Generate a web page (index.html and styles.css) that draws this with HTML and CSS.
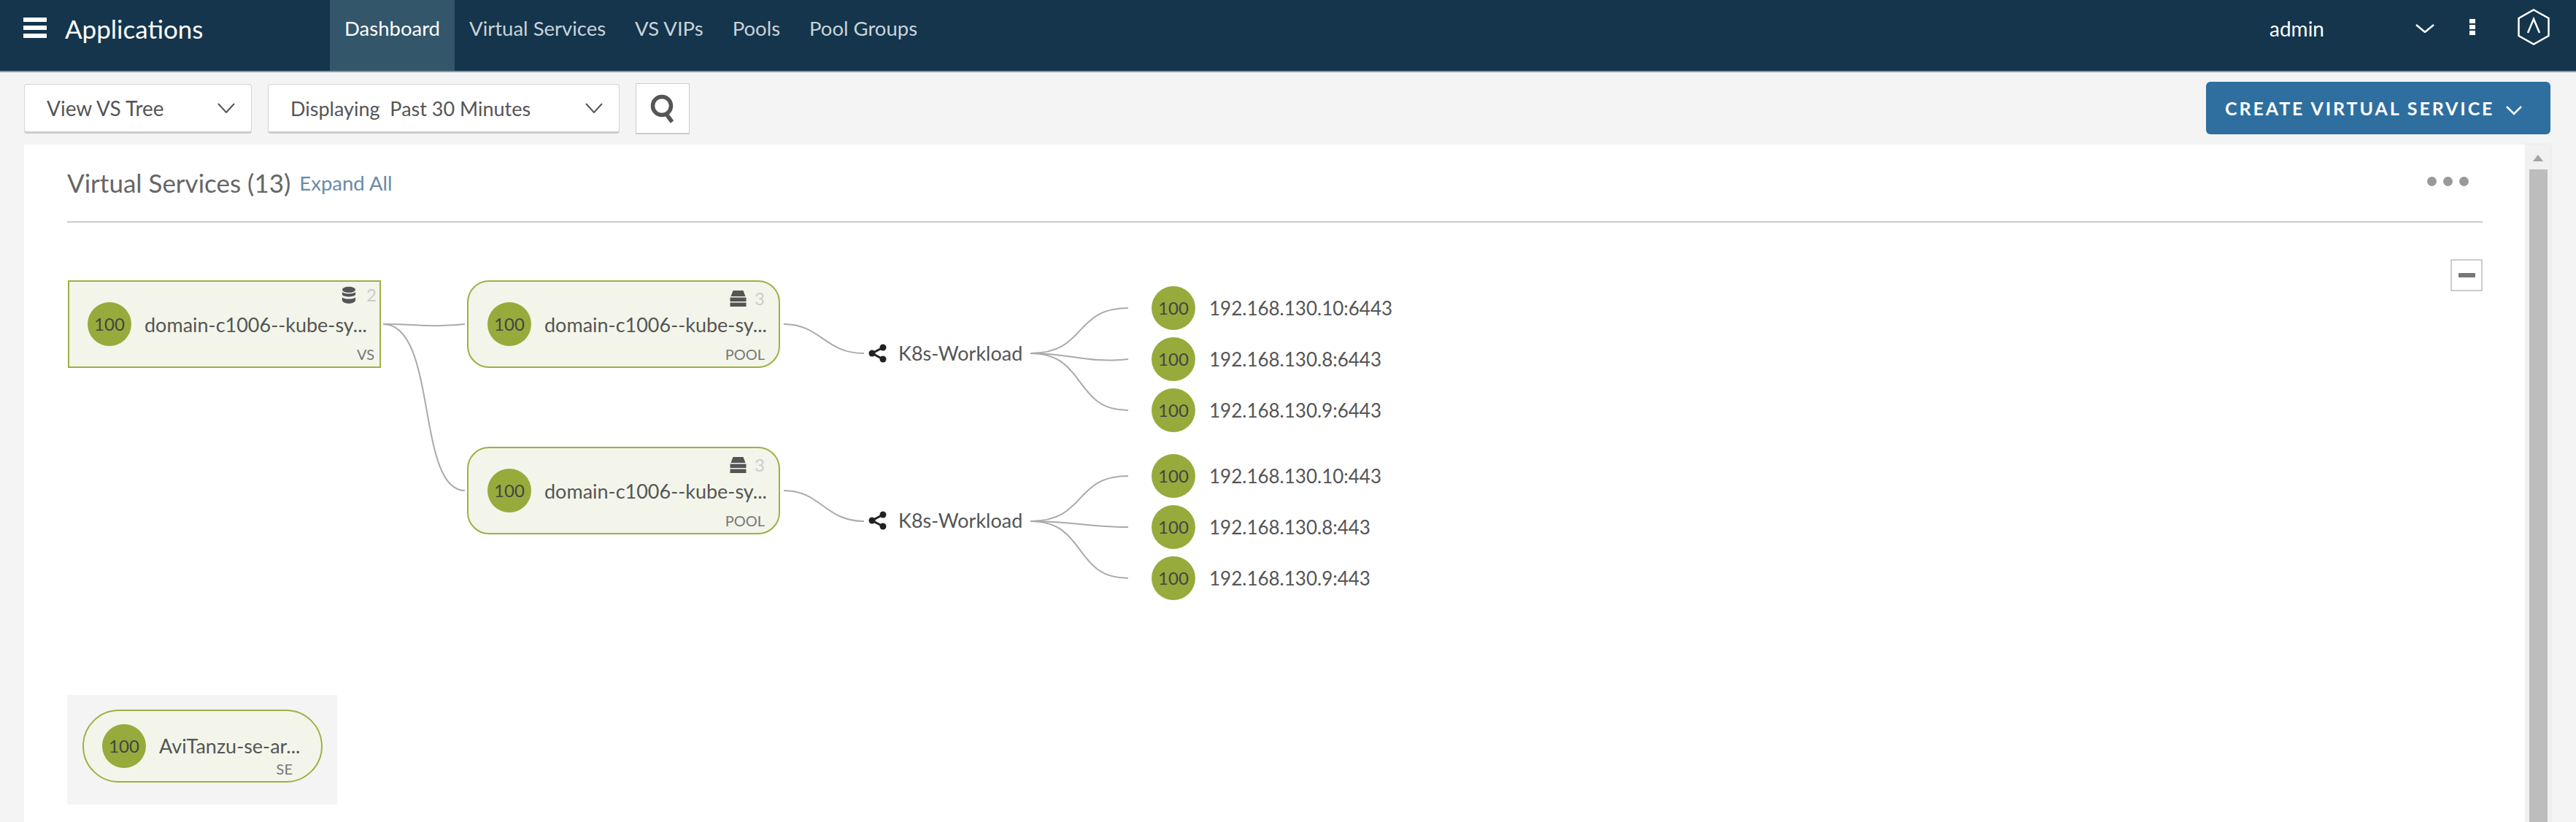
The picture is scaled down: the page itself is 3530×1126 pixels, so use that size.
FILE: index.html
```html
<!DOCTYPE html>
<html>
<head>
<meta charset="utf-8">
<title>Applications</title>
<link rel="stylesheet" href="styles.css">
</head>
<body>
<div class="topbar">
<div class="menu-icon"><span></span><span></span><span></span></div>
<div class="app-title">Applications</div>
<div class="nav">
<a class="active">Dashboard</a>
<a>Virtual Services</a>
<a>VS VIPs</a>
<a>Pools</a>
<a>Pool Groups</a>
</div>
<div class="user">admin</div>
<svg class="user-chev" viewBox="0 0 26 12"><path d="M1 1 L13 11 L25 1"/></svg>
<div class="kebab"><span></span><span></span><span></span></div>
<svg class="logo" viewBox="0 0 44 50"><path class="hex" d="M22 1.5 L42.5 13 V37 L22 48.5 L1.5 37 V13 Z"/><path class="caret" d="M14 33 L22 14 L30 33"/></svg>
</div>

<div class="toolbar">
<div class="select select-tree">View VS Tree<svg class="chev" viewBox="0 0 24 14"><path d="M1 1 L12 13 L23 1"/></svg></div>
<div class="select select-time">Displaying&nbsp; Past 30 Minutes<svg class="chev" viewBox="0 0 24 14"><path d="M1 1 L12 13 L23 1"/></svg></div>
<div class="search-btn"><svg viewBox="0 0 36 40"><circle cx="17" cy="16" r="12.5"/><path d="M22 26 L31 38"/></svg></div>
<div class="create-btn">CREATE VIRTUAL SERVICE<svg viewBox="0 0 22 14"><path d="M1 2 L11 12 L21 2"/></svg></div>
</div>

<div class="main">
<div class="panel">
<div class="panel-head">
<span class="panel-title">Virtual Services (13)</span>
<a class="expand">Expand All</a>
<div class="dots"><span></span><span></span><span></span></div>
</div>
<div class="tree">
<svg class="links" viewBox="33 305 3428 821">
<path d="M525 444 C580 444 580 449 637 444"/>
<path d="M525 444 C600 444 570 672 637 672"/>
<path d="M1074 444 C1125 444 1130 484 1184 484"/>
<path d="M1074 672 C1125 672 1130 714 1184 714"/>
<path d="M1412 484 C1490 484 1470 422 1546 422"/>
<path d="M1412 484 C1470 484 1490 498 1546 492"/>
<path d="M1412 484 C1490 484 1470 562 1546 562"/>
<path d="M1412 714 C1490 714 1470 652 1546 652"/>
<path d="M1412 714 C1470 714 1490 722 1546 722"/>
<path d="M1412 714 C1490 714 1470 792 1546 792"/>
</svg>
<button class="collapse"><span></span></button>

<div class="node node-vs">
<div class="score">100</div>
<div class="name">domain-c1006--kube-sy...</div>
<div class="count"><svg viewBox="0 0 22 26"><ellipse cx="11" cy="4.500" rx="10" ry="4.500"/><path d="M1 8 C4 11.500 18 11.500 21 8 V12.500 C18 16 4 16 1 12.500 Z"/><path d="M1 16 C4 19.500 18 19.500 21 16 V21 C18 27 4 27 1 21 Z"/></svg>2</div>
<div class="kind">VS</div>
</div>

<div class="node node-pool pool-a">
<div class="score">100</div>
<div class="name">domain-c1006--kube-sy...</div>
<div class="count"><svg viewBox="0 0 24 24"><use href="#pool-icon"/></svg>3</div>
<div class="kind">POOL</div>
</div>

<div class="node node-pool pool-b">
<div class="score">100</div>
<div class="name">domain-c1006--kube-sy...</div>
<div class="count"><svg viewBox="0 0 24 24"><use href="#pool-icon"/></svg>3</div>
<div class="kind">POOL</div>
</div>

<div class="group group-a"><svg viewBox="0 0 25 26"><use href="#share-icon"/></svg>K8s-Workload</div>
<div class="group group-b"><svg viewBox="0 0 25 26"><use href="#share-icon"/></svg>K8s-Workload</div>

<div class="servers servers-a">
<div class="server"><div class="score">100</div>192.168.130.10:6443</div>
<div class="server"><div class="score">100</div>192.168.130.8:6443</div>
<div class="server"><div class="score">100</div>192.168.130.9:6443</div>
</div>
<div class="servers servers-b">
<div class="server"><div class="score">100</div>192.168.130.10:443</div>
<div class="server"><div class="score">100</div>192.168.130.8:443</div>
<div class="server"><div class="score">100</div>192.168.130.9:443</div>
</div>

<div class="se-box">
<div class="node node-se">
<div class="score">100</div>
<div class="name">AviTanzu-se-ar...</div>
<div class="kind">SE</div>
</div>
</div>
</div>
</div>
<div class="scrollbar">
<div class="arrow"></div>
<div class="thumb"></div>
</div>
</div>

<svg class="defs" width="0" height="0">
<defs>
<g id="pool-icon">
<path d="M5 1 H19 L22 9 H2 Z"/>
<rect x="1" y="10.500" width="22" height="5.500"/>
<rect x="1" y="17.500" width="22" height="5.500"/>
</g>
<g id="share-icon">
<circle cx="5" cy="13" r="4.500"/>
<circle cx="20" cy="5" r="4.500"/>
<circle cx="20" cy="21" r="4.500"/>
<path class="share-line" d="M20 5 L5 13 L20 21"/>
</g>
</defs>
</svg>
</body>
</html>
```
FILE: styles.css
```css
html, body
{
margin:0;
height:1126px;
overflow:hidden;
}
body
{
background:#f4f4f4;
font-family:"Lato","Noto Sans",sans-serif;
color:#555;
}

/* top bar */
.topbar
{
height:97px;
background:#14354c;
border-bottom:2px solid #8a9aa6;
display:flex;
align-items:flex-start;
color:#fff;
}
.menu-icon
{
width:32px;
margin:24px 0 0 32px;
display:flex;
flex-direction:column;
gap:5px;
}
.menu-icon span
{
height:6px;
background:#fff;
}
.app-title
{
font-size:35px;
line-height:40px;
margin:19px 0 0 25px;
width:363px;
white-space:nowrap;
}
.nav
{
display:flex;
font-size:27.500px;
color:#c9d3da;
}
.nav a
{
height:97px;
line-height:78px;
padding:0 20px;
}
.nav a.active
{
background:#33566a;
color:#fff;
}
.user
{
font-size:28px;
line-height:78px;
margin-left:auto;
}
.user-chev
{
width:26px;
height:12px;
margin:33px 0 0 125px;
fill:none;
stroke:#fff;
stroke-width:2.500;
}
.kebab
{
margin:26px 0 0 48px;
width:8px;
display:flex;
flex-direction:column;
gap:2px;
}
.kebab span
{
height:6px;
background:#fff;
}
.logo
{
width:44px;
height:50px;
margin:12px 36px 0 58px;
fill:none;
stroke:#fff;
}
.logo .hex
{
stroke-width:2.500;
}
.logo .caret
{
stroke-width:2.500;
}

/* toolbar */
.toolbar
{
display:flex;
align-items:flex-start;
height:99px;
padding:13px 35px 0 33px;
box-sizing:border-box;
}
.select
{
height:68px;
margin-top:3px;
margin-right:22px;
box-sizing:border-box;
background:#fff;
border:1px solid #d4d4d4;
border-bottom:3px solid #ccc;
border-radius:4px;
display:flex;
align-items:center;
justify-content:space-between;
padding:0 22px 0 30px;
font-size:27px;
color:#555;
}
.select-tree
{
width:312px;
font-size:28px;
}
.select-time
{
width:482px;
}
.chev
{
width:24px;
height:14px;
fill:none;
stroke:#555;
stroke-width:2;
}
.search-btn
{
width:74px;
height:70px;
margin-top:2px;
box-sizing:border-box;
background:#fff;
border:1px solid #ccc;
border-bottom:2px solid #ccc;
display:flex;
align-items:center;
justify-content:center;
}
.search-btn svg
{
width:36px;
height:40px;
fill:none;
stroke:#555;
stroke-width:5.500;
}
.create-btn
{
margin-left:auto;
width:472px;
height:72px;
box-sizing:border-box;
background:#2f6f9f;
border-radius:6px;
color:#fff;
font-size:25px;
font-weight:700;
letter-spacing:2.900px;
display:flex;
align-items:center;
padding-left:26px;
white-space:nowrap;
}
.create-btn svg
{
width:22px;
height:14px;
margin:5px 0 0 16px;
flex:none;
fill:none;
stroke:#fff;
stroke-width:2.500;
}

/* panel */
.main
{
display:flex;
height:930px;
padding:0 35px 0 33px;
box-sizing:border-box;
}
.panel
{
flex:1;
background:#fff;
display:flex;
flex-direction:column;
}
.panel-head
{
height:107px;
flex:none;
box-sizing:border-box;
margin:0 59px;
border-bottom:2px solid #ccc;
display:flex;
align-items:flex-start;
padding-top:29px;
}
.panel-title
{
font-size:35px;
line-height:46px;
color:#666;
}
.expand
{
font-size:27.500px;
line-height:48px;
color:#6a8aa8;
margin-left:12px;
}
.dots
{
margin:15px 19px 0 auto;
display:flex;
gap:9px;
}
.dots span
{
width:13px;
height:13px;
border-radius:50%;
background:#999;
}
.scrollbar
{
width:34px;
background:#f1f1f1;
box-shadow:0 0 3px #ddd;
display:flex;
flex-direction:column;
align-items:center;
padding-top:14px;
box-sizing:border-box;
}
.arrow
{
width:0;
height:0;
border-left:7px solid transparent;
border-right:7px solid transparent;
border-bottom:9px solid #a3a3a3;
}
.thumb
{
width:25px;
flex:1;
margin-top:11px;
background:#bdbdbd;
}

/* tree canvas */
.tree
{
flex:1;
position:relative;
overflow:hidden;
}
.links
{
position:absolute;
left:0;
top:0;
width:3428px;
height:821px;
fill:none;
stroke:#aaa;
stroke-width:2;
}
.collapse
{
position:absolute;
left:3325px;
top:50px;
width:44px;
height:44px;
padding:0;
background:#fff;
border:2px solid #ccc;
display:flex;
align-items:center;
justify-content:center;
}
.collapse span
{
width:23px;
height:6px;
background:#777;
border-radius:1px;
}
.node
{
position:absolute;
box-sizing:border-box;
width:429px;
height:120px;
background:#f3f5ea;
border:2px solid #9db044;
}
.node .score
{
position:absolute;
left:25px;
top:28px;
}
.score
{
width:60px;
height:60px;
border-radius:50%;
background:#96ab3c;
color:#444;
font-size:24px;
line-height:60px;
text-align:center;
flex:none;
}
.name
{
position:absolute;
left:103px;
top:41px;
font-size:27px;
line-height:36px;
color:#555;
white-space:nowrap;
}
.count
{
position:absolute;
right:4px;
top:4px;
display:flex;
align-items:center;
gap:14px;
font-size:24px;
line-height:28px;
color:#ccc;
}
.count svg
{
width:20px;
height:25px;
fill:#555;
}
.kind
{
position:absolute;
right:7px;
bottom:3px;
font-size:20px;
line-height:28px;
color:#777;
}
.node-vs
{
left:60px;
top:79px;
}
.node-pool
{
border-radius:30px;
}
.node-pool .score
{
left:26px;
}
.node-pool .name
{
left:104px;
}
.node-pool .count
{
right:19px;
top:9px;
gap:10px;
}
.node-pool .count svg
{
width:25px;
height:24px;
}
.node-pool .kind
{
right:19px;
}
.pool-a
{
left:607px;
top:79px;
}
.pool-b
{
left:607px;
top:307px;
}
.group
{
position:absolute;
display:flex;
align-items:center;
gap:16px;
font-size:27px;
line-height:36px;
color:#555;
}
.group svg
{
width:25px;
height:26px;
fill:#222;
}
.share-line
{
fill:none;
stroke:#222;
stroke-width:3;
}
.group-a
{
left:1157px;
top:161px;
}
.group-b
{
left:1157px;
top:390px;
}
.servers
{
position:absolute;
left:1545px;
display:flex;
flex-direction:column;
gap:10px;
}
.servers-a
{
top:87px;
}
.servers-b
{
top:317px;
}
.server
{
display:flex;
align-items:center;
gap:19px;
font-size:26px;
color:#555;
}
.se-box
{
position:absolute;
left:59px;
top:647px;
width:370px;
height:150px;
background:#f4f4f4;
}
.node-se
{
left:21px;
top:20px;
width:329px;
height:100px;
border-radius:50px;
}
.node-se .score
{
top:18px;
}
.node-se .name
{
top:30px;
}
.node-se .kind
{
right:39px;
bottom:3px;
}
.defs
{
position:absolute;
}
```
